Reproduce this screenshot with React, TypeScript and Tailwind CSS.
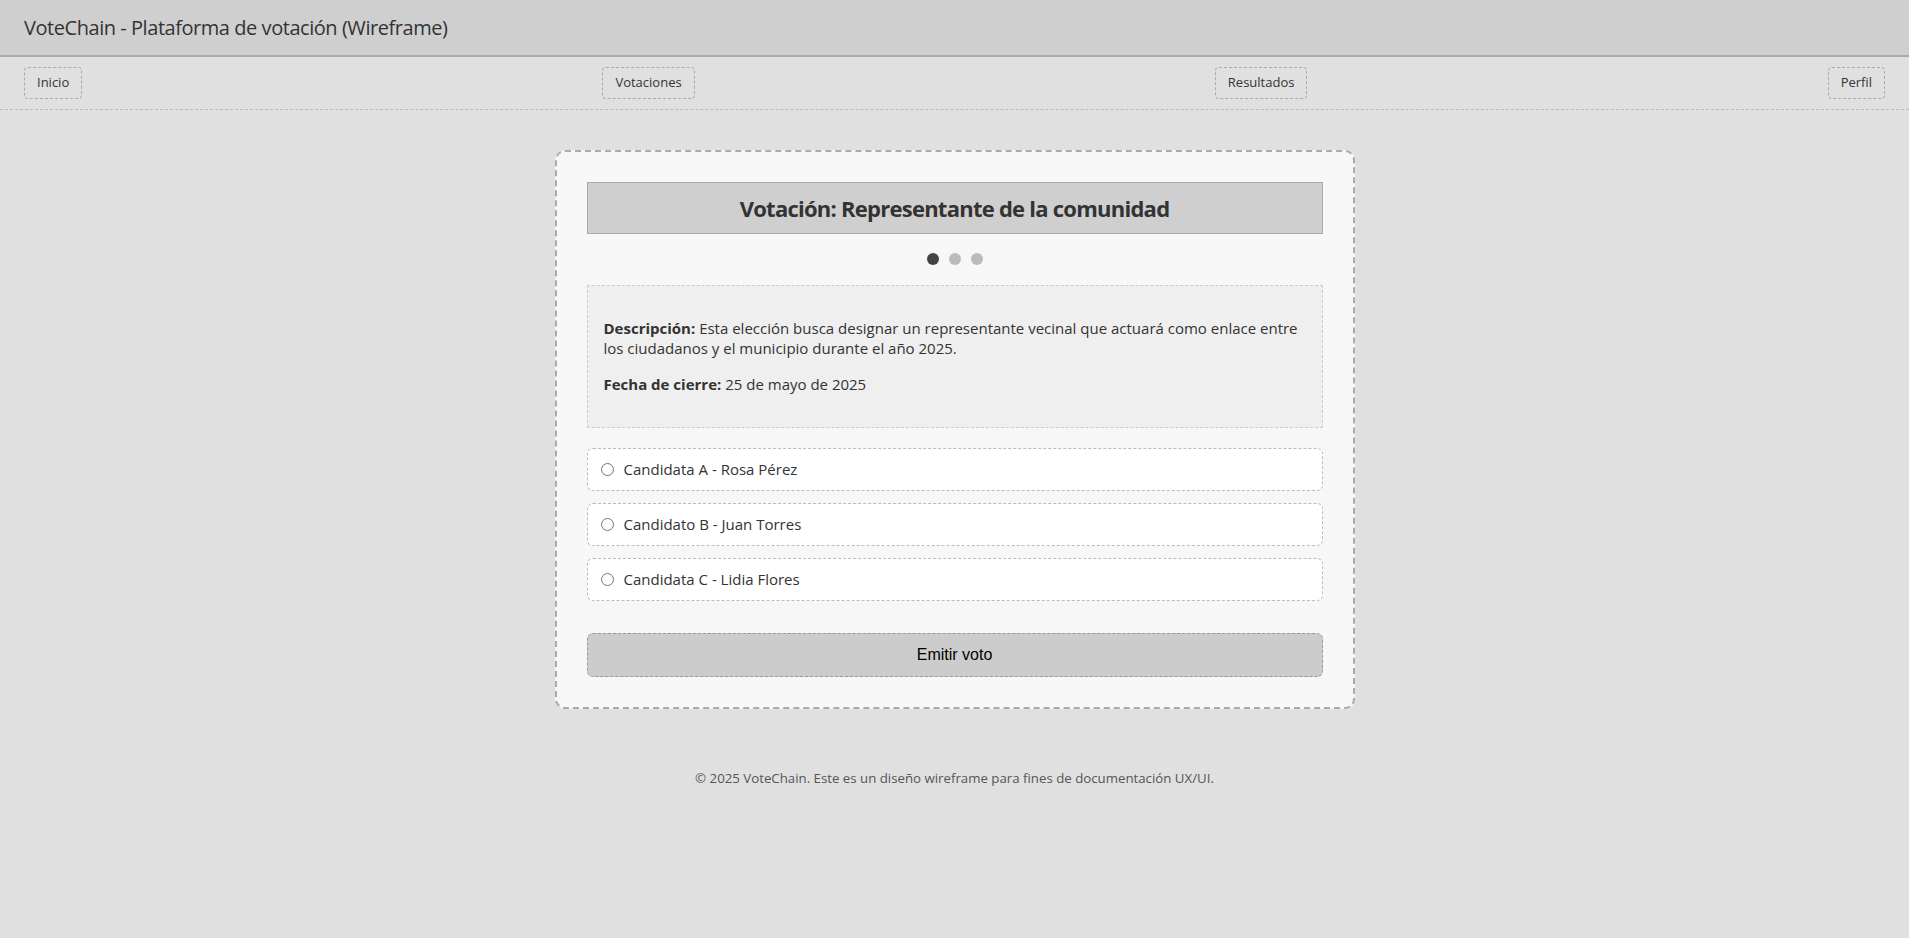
import { useState } from 'react'

const NAV = ['Inicio', 'Votaciones', 'Resultados', 'Perfil']

const CANDIDATES = [
  'Candidata A - Rosa Pérez',
  'Candidato B - Juan Torres',
  'Candidata C - Lidia Flores',
]

export default function App() {
  const [choice, setChoice] = useState<number | null>(null)

  return (
    <div className="min-h-screen bg-[#e0e0e0] text-[#333] font-['Segoe_UI','Open_Sans',sans-serif]">
      {/* Header */}
      <header className="bg-[#cfcfcf] border-b-2 border-[#aaa] px-6 py-[14px]">
        <h1 className="text-[20px] leading-[27px] font-normal tracking-[-0.45px]">
          VoteChain - Plataforma de votación (Wireframe)
        </h1>
      </header>

      {/* Nav */}
      <nav className="flex justify-between items-center px-6 py-[10px] border-b border-dashed border-[#bbb]">
        {NAV.map((item) => (
          <button
            key={item}
            type="button"
            className="h-8 px-3 text-[13px] text-[#333] border border-dashed border-[#aaa] rounded-[4px]"
          >
            {item}
          </button>
        ))}
      </nav>

      {/* Card */}
      <main className="pt-10">
        <div className="mx-auto w-[800px] bg-[#f7f7f7] border-2 border-dashed border-[#aaa] rounded-[10px] p-[30px]">
          <h2 className="bg-[#cfcfcf] border border-[#aaa] py-[10px] text-center text-[22px] leading-[30px] font-bold tracking-[-0.75px]">
            Votación: Representante de la comunidad
          </h2>

          <div className="flex justify-center gap-[10px] mt-[19px] mb-5">
            <span className="w-3 h-3 rounded-full bg-[#444]" />
            <span className="w-3 h-3 rounded-full bg-[#bbb]" />
            <span className="w-3 h-3 rounded-full bg-[#bbb]" />
          </div>

          <div className="bg-[#efefef] border border-dashed border-[#ccc] px-4 pt-4 pb-[17px] text-[15px] leading-[20px]">
            <p className="my-4">
              <b>Descripción:</b> Esta elección busca designar un representante vecinal que actuará como enlace entre
              los ciudadanos y el municipio durante el año 2025.
            </p>
            <p className="my-4">
              <b>Fecha de cierre:</b> 25 de mayo de 2025
            </p>
          </div>

          <div className="mt-5 flex flex-col gap-3">
            {CANDIDATES.map((c, i) => (
              <label
                key={c}
                className="h-[43px] flex items-center gap-[10px] pl-[13px] bg-white border border-dashed border-[#bbb] rounded-[6px] text-[15px] cursor-pointer"
              >
                <input
                  type="radio"
                  name="candidato"
                  className="m-0 w-[13px] h-[13px]"
                  checked={choice === i}
                  onChange={() => setChoice(i)}
                />
                {c}
              </label>
            ))}
          </div>

          <button
            type="button"
            className="mt-8 w-full h-11 bg-[#ccc] border border-dashed border-[#999] rounded-[6px] text-[16px] text-black font-['Liberation_Sans',Arial,sans-serif]"
          >
            Emitir voto
          </button>
        </div>
      </main>

      <footer className="text-center text-[13.25px] text-[#555] pt-[60px] pb-10">
        © 2025 VoteChain. Este es un diseño wireframe para fines de documentación UX/UI.
      </footer>
    </div>
  )
}
